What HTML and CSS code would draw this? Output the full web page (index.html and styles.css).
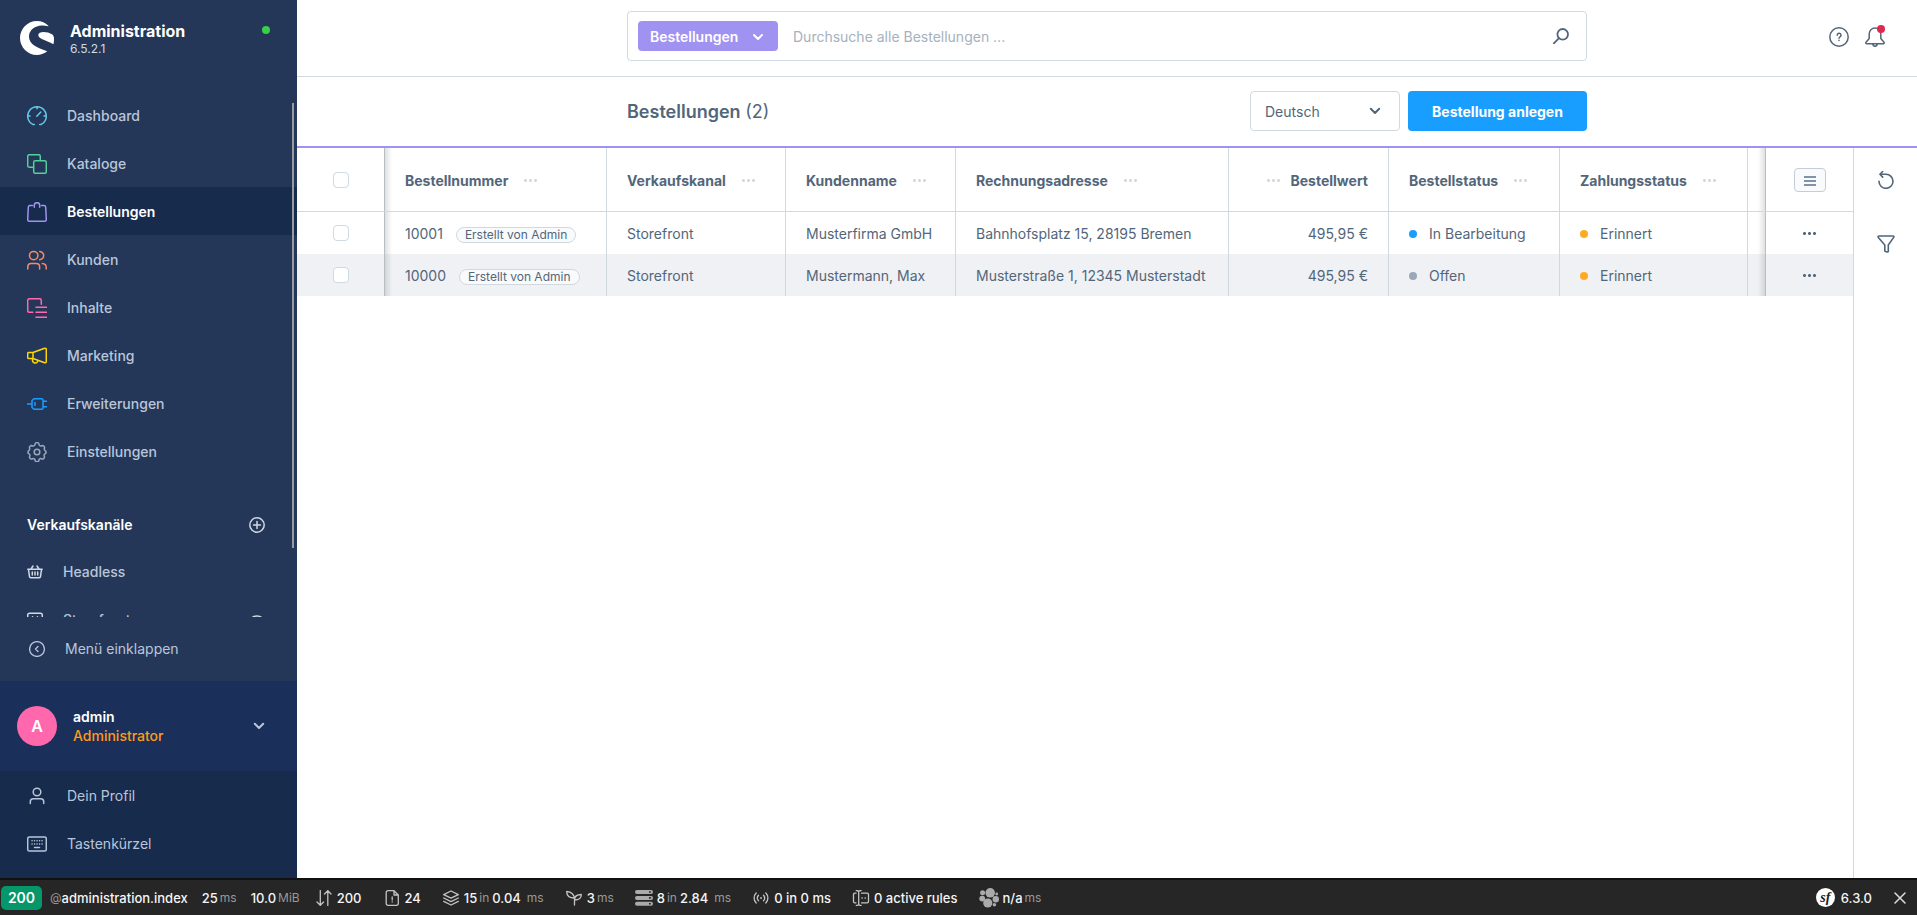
FILE: index.html
```html
<!DOCTYPE html>
<html lang="de">
<head>
<meta charset="utf-8">
<title>Bestellungen | Administration</title>
<link rel="stylesheet" href="styles.css">
</head>
<body>
<div class="app">
  <aside class="menu">
    <header class="menu-head">
      <svg class="logo" viewBox="0 0 34 34" width="34" height="34"><path d="M28.300 4.700C25.500 1.800 21.500 0 17 0 7.600 0 0 7.600 0 17s7.600 17 17 17c3.600 0 7-1.200 9.700-3.200.4-.3.300-.7-.1-.9C22 28.300 17.500 27 14.200 24.600 11.200 22.400 9 19.200 9 15.400 9 8.600 15.500 4.900 21.500 4.500c2.400-.1 4.700.1 6.500.7.500.1.700-.2.300-.5z"/><path d="M33.900 16.500c-.2-1.300-.7-2.300-1.500-2.900C29.800 11.800 26.500 11 23.500 11c-2.900 0-5.200 1-5.200 3.100 0 2.900 4.200 4.300 8.700 6.100 2.100.8 4.100 1.700 6 2.800.3.200.5 0 .6-.3.400-1.900.5-4.200.3-6.200z"/></svg>
      <div class="brand"><strong class="brand-name">Administration</strong><span class="brand-version">6.5.2.1</span></div>
      <span class="online"></span>
    </header>

    <div class="menu-scroll">
      <nav class="nav">
        <a class="nav-item" href="#"><svg class="ico c-cyan" viewBox="0 0 20 20"><path d="M7.300 18.400H5.800A9.300 9.300 0 1 1 14.200 18.400H12.700M10 .8v2M.8 10h2.200M17 10h2.200M9.800 10.300 13.800 6"/></svg>Dashboard</a>
        <a class="nav-item" href="#"><svg class="ico c-green" viewBox="0 0 20 20"><rect x="6.700" y="6.700" width="12.600" height="12.600" rx="1.600"/><path d="M6.500 13.300H2.300A1.600 1.600 0 0 1 .7 11.700V2.300A1.600 1.600 0 0 1 2.300.7h9.400a1.600 1.600 0 0 1 1.600 1.600v4.200"/></svg>Kataloge</a>
        <a class="nav-item nav-active" href="#"><svg class="ico c-violet" viewBox="0 0 20 20"><path d="M5.500 3.600H3a1.700 1.700 0 0 0-1.700 1.600L.7 17.500a1.700 1.700 0 0 0 1.700 1.800h15.200a1.700 1.700 0 0 0 1.700-1.800L18.700 5.200A1.700 1.700 0 0 0 17 3.600h-2.500M7.300 5.200V3.400a2.700 2.700 0 0 1 5.400 0v1.800"/></svg>Bestellungen</a>
        <a class="nav-item" href="#"><svg class="ico c-coral" viewBox="0 0 20 20"><circle cx="6.700" cy="5.600" r="4.200"/><path d="M.8 19v-2.300a3.300 3.300 0 0 1 3.300-3.300h5.200a3.300 3.300 0 0 1 3.300 3.300V19M12.700 1.400c2.300.4 4 2.200 4 4.200s-1.700 3.800-4 4.200M15.300 13.600c2.400.3 3.900 1.600 3.900 3.600V19"/></svg>Kunden</a>
        <a class="nav-item" href="#"><svg class="ico c-pink" viewBox="0 0 20 20"><path d="M5.800 14.300H2.500A1.800 1.800 0 0 1 .7 12.500v-10A1.800 1.800 0 0 1 2.500.7h10a1.800 1.800 0 0 1 1.800 1.800v3.800M9 9.300h11M9 14.300h11M9 19.300h11"/></svg>Inhalte</a>
        <a class="nav-item" href="#"><svg class="ico c-yellow" viewBox="0 0 20 20"><path d="M6 6.500 17.600 2.300a1.200 1.200 0 0 1 1.700 1.100v12.200a1.200 1.200 0 0 1-1.700 1.100L6 12.500zM6 6.500H1.700a1 1 0 0 0-1 1v4a1 1 0 0 0 1 1H6M5.500 12.700v1.600a2.700 2.700 0 0 0 5.200 1v-1"/></svg>Marketing</a>
        <a class="nav-item" href="#"><svg class="ico c-blue" viewBox="0 0 20 20"><path d="M.2 10h4.500M7.300 4.700h7.400a1.300 1.300 0 0 1 1.300 1.300v8a1.300 1.300 0 0 1-1.300 1.300H7.300L5 13.500v-7zM16 7.300h4M16 12.700h4M8 8.500v3"/></svg>Erweiterungen</a>
        <a class="nav-item" href="#"><svg class="ico c-gray" viewBox="0 0 20 20"><circle cx="10" cy="10" r="2.800"/><path d="M8 2.600a2 2 0 0 1 4 0 2 2 0 0 0 2.800 1.200 2 2 0 0 1 2.600 2.600A2 2 0 0 0 18 8.500a1.800 1.800 0 0 1 0 3.300 2 2 0 0 0-.8 2.300 2 2 0 0 1-2.700 2.700 2 2 0 0 0-2.500.9 2 2 0 0 1-4 0 2 2 0 0 0-2.500-.9 2 2 0 0 1-2.700-2.700A2 2 0 0 0 2 11.800a1.800 1.800 0 0 1 0-3.300 2 2 0 0 0 .6-2.100 2 2 0 0 1 2.600-2.600A2 2 0 0 0 8 2.600z"/></svg>Einstellungen</a>
      </nav>
      <section class="channels">
        <div class="channels-head"><h2 class="channels-title">Verkaufskanäle</h2>
          <button class="bare" type="button" aria-label="Kanal hinzufügen"><svg class="ico-16" viewBox="0 0 16 16"><circle cx="8" cy="8" r="7.200"/><path d="M8 4.500v7M4.500 8h7"/></svg></button></div>
        <a class="nav-item channel" href="#"><svg class="ico-16" viewBox="0 0 16 16"><path d="M.8 5.300h14.400M1.500 5.500l1 7.200a1.300 1.300 0 0 0 1.300 1.100h8.400a1.300 1.300 0 0 0 1.300-1.100l1-7.200M4 5l2-3M12 5l-2-3M5.300 8v3M8 8v3M10.700 8v3"/></svg>Headless</a>
        <a class="nav-item channel" href="#"><svg class="ico-16" viewBox="0 0 16 16"><path d="M.7 6V3A1.800 1.800 0 0 1 2.500 1.200h11A1.800 1.800 0 0 1 15.300 3v3a2.400 2.400 0 0 1-4.800 0 2.500 2.500 0 0 1-5 0 2.400 2.400 0 0 1-4.800 0zM5.500 6V4.800M10.500 6V4.800M2 9v5.500h12V9"/></svg>Storefront<svg class="ico-16 eye" viewBox="0 0 16 16"><path d="M.7 8.500S3.200 4 8 4s7.300 4.500 7.300 4.500S12.800 13 8 13 .7 8.500.7 8.500z"/><circle cx="8" cy="8.500" r="2"/></svg></a>
      </section>
    </div>

    <button class="collapse" type="button"><svg class="ico-16" viewBox="0 0 16 16"><circle cx="8" cy="8" r="7.400"/><path d="M9 5.500 6.500 8 9 10.500"/></svg>Menü einklappen</button>

    <div class="user">
      <span class="avatar">A</span>
      <div class="user-info"><strong class="user-name">admin</strong><span class="user-role">Administrator</span></div>
      <button class="bare" type="button" aria-label="Benutzermenü"><svg class="chev" viewBox="0 0 12 12"><path d="m1.800 3.800 4.200 4.200 4.200-4.200"/></svg></button>
    </div>
    <nav class="user-nav">
      <a class="nav-item" href="#"><svg class="ico" viewBox="0 0 20 20"><circle cx="10" cy="6" r="3.800"/><path d="M3.300 17.500v-1.800a3 3 0 0 1 3-3h7.400a3 3 0 0 1 3 3v1.800"/></svg>Dein Profil</a>
      <a class="nav-item" href="#"><svg class="ico" viewBox="0 0 20 20"><rect x=".7" y="3" width="18.600" height="14" rx="1.600"/><path d="M5 6.700h.1M7.500 6.700h.1M10 6.700h.1M12.500 6.700h.1M15 6.700h.1M5 10h.1M7.500 10h.1M10 10h.1M12.500 10h.1M15 10h.1M7.500 13.400h5"/></svg>Tastenkürzel</a>
    </nav>
    <span class="scrollbar"></span>
  </aside>

  <main class="page">
    <header class="topbar">
      <form class="search">
        <button class="chip" type="button">Bestellungen<svg class="chev" viewBox="0 0 12 12"><path d="m2 4 4 4 4-4"/></svg></button>
        <input class="search-input" type="search" aria-label="Suche" placeholder="Durchsuche alle Bestellungen ...">
        <button class="bare" type="button" aria-label="Suchen"><svg class="ico-16" viewBox="0 0 16 16"><circle cx="9.700" cy="6.300" r="5.300"/><path d="M6 10.200.9 15.300"/></svg></button>
      </form>
      <div class="top-actions">
        <button class="bare" type="button" aria-label="Hilfe"><svg class="ico" viewBox="0 0 20 20"><circle cx="10" cy="10" r="9.200"/><path d="M8.200 8.200a1.900 1.900 0 1 1 2.800 1.600c-.7.400-1 .7-1 1.400M10 13.300v.2"/></svg></button>
        <button class="bare bell" type="button" aria-label="Benachrichtigungen"><svg class="ico" viewBox="0 0 20 20"><path d="M10 1a5.800 5.800 0 0 0-5.800 5.800v4.700L1 15.300c-.5.700-.1 1.400.7 1.400h16.600c.8 0 1.200-.7.700-1.400l-3.200-3.800V6.800A5.800 5.800 0 0 0 10 1zM7.700 17c.3 1.600 1.200 2.300 2.300 2.300s2-.7 2.300-2.300"/></svg><span class="bell-dot"></span></button>
      </div>
    </header>

    <div class="smartbar">
      <div class="smartbar-inner">
        <h1 class="title">Bestellungen <span class="count">(2)</span></h1>
        <div class="lang-wrap"><select class="lang" aria-label="Sprache"><option>Deutsch</option></select><svg class="chev lang-chev" viewBox="0 0 12 12"><path d="m1.800 3.800 4.200 4.200 4.200-4.200"/></svg></div>
        <button class="primary" type="button">Bestellung anlegen</button>
      </div>
    </div>

    <div class="content">
      <div class="grid-wrap">
        <table class="grid">
          <colgroup><col class="w-check"><col class="w-number"><col class="w-channel"><col class="w-customer"><col class="w-address"><col class="w-value"><col class="w-status"><col class="w-payment"><col><col class="w-actions"></colgroup>
          <thead>
            <tr>
              <th class="check shade-right"><input class="box" type="checkbox" aria-label="Alle auswählen"></th>
              <th><span class="th">Bestellnummer<i class="dots"></i></span></th>
              <th><span class="th">Verkaufskanal<i class="dots"></i></span></th>
              <th><span class="th">Kundenname<i class="dots"></i></span></th>
              <th><span class="th">Rechnungsadresse<i class="dots"></i></span></th>
              <th><span class="th th-right"><i class="dots"></i>Bestellwert</span></th>
              <th><span class="th">Bestellstatus<i class="dots"></i></span></th>
              <th><span class="th">Zahlungsstatus<i class="dots"></i></span></th>
              <th></th>
              <th class="actions shade-left"><button class="columns" type="button" aria-label="Spalten"><svg viewBox="0 0 12 12" width="12" height="12"><path d="M0 2h12M0 6h12M0 10h12"/></svg></button></th>
            </tr>
          </thead>
          <tbody>
            <tr>
              <td class="check shade-right"><input class="box" type="checkbox" aria-label="10001 auswählen"></td>
              <td><a class="order" href="#">10001</a><span class="badge">Erstellt von Admin</span></td>
              <td>Storefront</td><td>Musterfirma GmbH</td><td>Bahnhofsplatz 15, 28195 Bremen</td><td class="num">495,95 €</td>
              <td><span class="state s-blue">In Bearbeitung</span></td><td><span class="state s-orange">Erinnert</span></td><td></td>
              <td class="actions shade-left"><button class="bare more" type="button" aria-label="Aktionen"><i class="dots dots-dark"></i></button></td>
            </tr>
            <tr>
              <td class="check shade-right"><input class="box" type="checkbox" aria-label="10000 auswählen"></td>
              <td><a class="order" href="#">10000</a><span class="badge">Erstellt von Admin</span></td>
              <td>Storefront</td><td>Mustermann, Max</td><td>Musterstraße 1, 12345 Musterstadt</td><td class="num">495,95 €</td>
              <td><span class="state s-gray">Offen</span></td><td><span class="state s-orange">Erinnert</span></td><td></td>
              <td class="actions shade-left"><button class="bare more" type="button" aria-label="Aktionen"><i class="dots dots-dark"></i></button></td>
            </tr>
          </tbody>
        </table>
      </div>
      <aside class="tools">
        <button class="bare tool" type="button" aria-label="Aktualisieren"><svg class="ico-18" viewBox="0 0 18 18"><path d="M2 10.200A7 7 0 1 0 9 3.300H3M5.700.5 2.900 3.300l2.800 2.800"/></svg></button>
        <button class="bare tool" type="button" aria-label="Filter"><svg class="ico-18" viewBox="0 0 18 18"><path d="M2 1h14c.8 0 1.200.8.700 1.400L11.300 10v6.300c0 .6-.5.900-1 .7l-1.900-.6a.8.800 0 0 1-.6-.8V10L1.300 2.400C.8 1.800 1.200 1 2 1z"/></svg></button>
      </aside>
    </div>
  </main>
</div>

<footer class="debug">
  <a class="code" href="#">200</a>
  <span class="dbg dbg-text"><small>@</small>administration.index</span>
  <span class="dbg dbg-text">25<small class="unit">ms</small></span>
  <span class="dbg dbg-text">10.0<small class="unit">MiB</small></span>
  <span class="dbg"><svg class="dico" viewBox="0 0 16 16"><path d="M4.300.5v15M1 12l3.300 3.300L7.500 12M11.800 15.500V.5M8.500 4l3.300-3.300L15 4"/></svg>200</span>
  <span class="dbg"><svg class="dico" viewBox="0 0 16 16"><path d="M10 .7H4A1.800 1.800 0 0 0 2.200 2.500v11A1.800 1.800 0 0 0 4 15.300h8.500a1.800 1.800 0 0 0 1.800-1.800V5zM10 .7V5h4.300M8.200 7v3M8.200 11.800v.2"/></svg>24</span>
  <span class="dbg"><svg class="dico" viewBox="0 0 16 16"><path d="m8 1 7.300 3.600L8 8.200.7 4.600zM.7 8 8 11.600 15.300 8M.7 11.400 8 15l7.300-3.600"/></svg>15<small class="unit">in</small><b class="val">0.04</b><small class="unit-wide">ms</small></span>
  <span class="dbg"><svg class="dico" viewBox="0 0 16 16"><path d="M8.500 15V9.500C8.500 5 5.500 1.500.7 1.500c0 4 2.800 6.500 7.800 6.500M8.500 10c0-3.500 2.500-5.500 6.800-5.500 0 3.500-2.500 5.500-6.800 5.500"/></svg>3<small class="unit">ms</small></span>
  <span class="dbg"><svg class="dico solid" viewBox="0 0 18 16"><path fill-rule="evenodd" d="M2 0h14q2 0 2 2t-2 2H2Q0 4 0 2t2-2zm12 1.200v1.600h1.800V1.200zM2 5.900h14q2 0 2 2t-2 2H2q-2 0-2-2t2-2zm12 1.200v1.600h1.800V7.100zM2 11.800h14q2 0 2 2t-2 2H2q-2 0-2-2t2-2zm12 1.200v1.600h1.800V13z"/></svg>8<small class="unit">in</small><b class="val">2.84</b><small class="unit-wide">ms</small></span>
  <span class="dbg"><svg class="dico" viewBox="0 0 16 16"><path d="M3.200 3a7 7 0 0 0 0 10M12.800 3a7 7 0 0 1 0 10M5.500 5.300a4 4 0 0 0 0 5.400M10.500 5.300a4 4 0 0 1 0 5.400M7.500 8h1"/></svg>0 in 0 ms</span>
  <span class="dbg"><svg class="dico" viewBox="0 0 16 16"><path d="M3 3.200H1.800A1.300 1.300 0 0 0 .5 4.500v7a1.300 1.300 0 0 0 1.300 1.300H3M8.500 3.200h5.700a1.300 1.300 0 0 1 1.300 1.300v7a1.300 1.300 0 0 1-1.300 1.300H8.500M5.700 1.500v13M3.300.5q2.400 0 2.400 1.500 0-1.500 2.400-1.500M3.300 15.500q2.400 0 2.400-1.500 0 1.500 2.400 1.500M9 8h.3M12 8h.3"/></svg>0 active rules</span>
  <span class="dbg"><svg class="dico-lg solid" viewBox="0 0 20 20"><circle cx="11.200" cy="4.800" r="4.800"/><circle cx="3.600" cy="4.800" r="2.500"/><circle cx="3.200" cy="10.600" r="2.900"/><circle cx="16.800" cy="11.300" r="3.200"/><circle cx="8.800" cy="15" r="4.600"/><circle cx="15.400" cy="16.700" r="1.800"/><circle cx="17.700" cy="6" r="1.400"/></svg>n/a<small class="unit">ms</small></span>
  <span class="dbg-right"><span class="sf">sf</span>6.3.0<button class="bare close" type="button" aria-label="Schließen"><svg viewBox="0 0 12 12" width="12" height="12"><path d="m1 1 10 10M11 1 1 11"/></svg></button></span>
</footer>
</body>
</html>
```
FILE: styles.css
```css
* { box-sizing: border-box; }
body {
  margin: 0;
  height: 100vh;
  display: flex;
  flex-direction: column;
  font: 14px/20px Inter, "Liberation Sans", sans-serif;
  color: #52667a;
  background: #fff;
}
a { color: inherit; text-decoration: none; }
svg { fill: none; stroke: currentColor; stroke-width: 1.5; stroke-linecap: round; stroke-linejoin: round; flex: none; display: block; }
button { font: inherit; cursor: pointer; }
.bare { border: 0; padding: 0; background: none; color: inherit; display: inline-flex; }
.ico { width: 20px; height: 20px; }
.ico-16 { width: 16px; height: 16px; }
.ico-18 { width: 18px; height: 18px; stroke-width: 1.6; }
.chev { width: 12px; height: 12px; stroke-width: 2; }

.app { flex: 1; display: flex; min-height: 0; }

/* Main menu */
.menu {
  position: relative;
  width: 297px;
  flex: none;
  display: flex;
  flex-direction: column;
  background: #243758;
  color: #b9c6da;
}
.menu-head { height: 91px; flex: none; display: flex; align-items: flex-start; padding: 21px 27px 0 20px; }
.logo { fill: #fff; stroke: none; }
.brand { margin-left: 16px; flex: 1; }
.brand-name { display: block; font-size: 16px; font-weight: 700; color: #fff; }
.brand-version { display: block; font-size: 12px; line-height: 16px; color: #d1d9e0; }
.online { width: 8px; height: 8px; border-radius: 50%; background: #37d046; margin-top: 5px; }
.menu-scroll { flex: 1; min-height: 0; overflow: hidden; }
.nav-item { display: flex; align-items: center; gap: 20px; height: 48px; padding: 1px 32px 0 27px; font-weight: 500; }
.nav-active { background: #172b4d; color: #fff; font-weight: 600; }
.c-cyan { color: #65c7e8; }
.c-green { color: #54d09a; }
.c-violet { color: #a092f0; }
.c-coral { color: #f88962; }
.c-pink { color: #ff68ac; }
.c-yellow { color: #ffd700; }
.c-blue { color: #189eff; }
.c-gray { color: #98a9bc; }
.channels { padding-top: 28px; }
.channels-head { display: flex; align-items: center; justify-content: space-between; height: 44px; padding: 0 32px 0 27px; }
.channels-title { margin: 0; font-size: 14px; font-weight: 600; color: #fff; }
.channels .ico-16 { color: #d1d9e0; }
.eye { margin-left: auto; }
.collapse { display: flex; align-items: center; gap: 20px; height: 64px; flex: none; border: 0; padding: 0 29px; background: none; color: inherit; }
.collapse .ico-16 { stroke-width: 1.3; }
.user { display: flex; align-items: center; height: 90px; flex: none; padding: 0 32px 0 17px; background: #1a305a; }
.avatar { width: 40px; height: 40px; border-radius: 50%; display: grid; place-items: center; background: #ff68ac; color: #fff; font-size: 16px; font-weight: 600; }
.user-info { flex: 1; margin-left: 16px; line-height: 19px; }
.user-name { display: block; font-weight: 600; color: #fff; }
.user-role { display: block; font-weight: 500; color: #ff9a1a; }
.user-nav { height: 107px; flex: none; background: #172b4d; }
.user-nav .nav-item { font-weight: 400; }
.scrollbar { position: absolute; top: 103px; right: 3px; width: 2px; height: 445px; background: #989aa4; }

/* Header */
.page { flex: 1; min-width: 0; display: flex; flex-direction: column; }
.topbar { height: 77px; flex: none; display: grid; grid-template-columns: 1fr minmax(0, 960px) 1fr; align-items: start; padding-top: 11px; border-bottom: 1px solid #d1d9e0; }
.search { grid-column: 2; display: flex; align-items: center; height: 50px; padding: 0 17px 0 10px; border: 1px solid #d1d9e0; border-radius: 4px; }
.chip { display: flex; align-items: center; justify-content: space-between; width: 140px; height: 30px; border: 0; border-radius: 4px; padding: 2px 14px 0 12px; background: #a092f0; color: #fff; font-weight: 600; }
.search-input { flex: 1; min-width: 0; height: 40px; border: 0; padding: 0 15px; outline: 0; background: none; font: inherit; color: inherit; }
.search-input::placeholder { color: #a5b1bd; opacity: 1; }
.search .ico-16 { stroke-width: 1.8; }
.top-actions { grid-column: 3; justify-self: end; display: flex; gap: 16px; padding: 16px 32px 0 0; }
.bell { position: relative; }
.bell-dot { position: absolute; top: -2px; right: 0; width: 8px; height: 8px; border-radius: 50%; background: #de294c; }

.smartbar { height: 71px; flex: none; display: flex; justify-content: center; align-items: flex-start; padding-top: 14px; border-bottom: 2px solid #a092f0; }
.smartbar-inner { width: 960px; display: flex; align-items: center; gap: 8px; }
.title { flex: 1; margin: 0; padding-top: 2px; font-size: 18px; line-height: 24px; font-weight: 600; }
.count { font-weight: 400; }
.lang-wrap { position: relative; }
.lang { appearance: none; display: block; width: 150px; height: 40px; border: 1px solid #d1d9e0; border-radius: 4px; padding: 2px 14px 0; background: #fff; font: inherit; color: inherit; }
.lang-chev { position: absolute; right: 19px; top: 14px; pointer-events: none; }
.primary { min-width: 179px; height: 40px; border: 0; border-radius: 4px; padding: 2px 16px 0; background: #189eff; color: #fff; font-weight: 700; }

/* Order list */
.content { flex: 1; min-height: 0; display: flex; }
.grid-wrap { flex: 1; min-width: 0; overflow: hidden; }
.grid { width: 100%; table-layout: fixed; border-collapse: separate; border-spacing: 0; }
.w-check { width: 88px; }
.w-number { width: 222px; }
.w-channel { width: 179px; }
.w-customer { width: 170px; }
.w-address { width: 273px; }
.w-value { width: 160px; }
.w-status { width: 171px; }
.w-payment { width: 188px; }
.w-actions { width: 87px; }
.grid th, .grid td { padding: 0; border-right: 1px solid #d1d9e0; text-align: left; white-space: nowrap; }
.grid th:not(:empty), .grid td:not(:empty) { padding: 2px 20px 0; }
.grid th { height: 64px; border-bottom: 1px solid #d1d9e0; font-weight: 700; }
.grid td { height: 42px; }
.grid tbody tr:nth-child(even) { background: #f0f1f5; }
.grid .actions { border-right: 0; }
.grid .check:not(:empty), .grid .actions:not(:empty) { padding: 0 20px; }
.grid .num { text-align: right; }
.shade-right, .shade-left { position: relative; }
.shade-right::after, .shade-left::after { content: ""; position: absolute; top: 0; bottom: 0; width: 8px; }
.shade-right::after { left: 100%; background: linear-gradient(90deg, rgba(60, 60, 60, .18), transparent); }
.shade-left::after { right: 100%; background: linear-gradient(270deg, rgba(60, 60, 60, .18), transparent); }
.th { display: flex; align-items: center; gap: 16px; }
.th-right { justify-content: flex-end; gap: 10px; }
.dots { width: 13px; height: 3px; background: radial-gradient(circle at 1.5px 1.5px, #d1d9e0 1px, transparent 2px) 0 0 / 5px 3px; }
.dots-dark { background-image: radial-gradient(circle at 1.5px 1.5px, #52667a 1px, transparent 2px); }
.more { display: flex; align-items: center; justify-content: center; height: 20px; margin: 0 auto; }
.box { appearance: none; display: block; width: 16px; height: 16px; margin: 0 auto; border: 1px solid #d1d9e0; border-radius: 4px; background: #fff; }
.badge { display: inline-block; margin-left: 13px; border: 1px solid #d1d9e0; border-radius: 8px; padding: 0 8px; background: #f9fafb; font-size: 12px; line-height: 14px; }
.state { display: flex; align-items: center; gap: 12px; }
.state::before { content: ""; width: 8px; height: 8px; border-radius: 50%; background: #9aa8b9; }
.s-blue::before { background: #189eff; }
.s-orange::before { background: #ffab22; }
.columns { display: grid; place-items: center; width: 32px; height: 24px; margin: 0 auto; padding: 2px 0 0; border: 1px solid #c2cdd8; border-radius: 4px; background: #f9fafb; color: #8093a8; }
.columns svg { stroke-width: 2; stroke-linecap: butt; }
.tools { width: 64px; flex: none; border-left: 1px solid #d1d9e0; }
.tool { display: flex; justify-content: center; align-items: center; width: 100%; height: 64px; }

/* Debug toolbar */
.debug { height: 37px; flex: none; display: flex; align-items: center; gap: 21px; padding: 0 11px 0 1px; border-top: 2px solid #111; background: #262626; color: #f5f5f5; font-size: 13px; font-weight: 500; white-space: nowrap; }
.code { width: 41px; height: 24px; border-radius: 5px; background: #059669; color: #fff; font-size: 14px; font-weight: 600; line-height: 24px; text-align: center; }
.dbg { display: flex; align-items: center; }
.dbg-text { margin-left: -7px; }
.code + .dbg-text { margin-left: -13px; }
.dbg-text + .dbg:not(.dbg-text) { margin-left: -6px; }
.debug small { font-size: 12px; font-weight: 400; color: #999; }
.unit { margin-left: 2px; }
.val { margin-left: 3px; font-weight: 500; }
.unit-wide { margin-left: 6px; }
.dico { width: 18px; height: 16px; margin-right: 4px; color: #c4c4c4; stroke-width: 1.3; }
.dico-lg { width: 20px; height: 20px; margin-right: 4px; }
.solid { fill: #aaa; stroke: none; }
.dbg-right { margin-left: auto; display: flex; align-items: center; }
.sf { display: grid; place-items: center; width: 19px; height: 19px; margin-right: 6px; border-radius: 50%; background: #fff; color: #222; font: italic bold 14px/18px "Liberation Serif", serif; }
.close { margin-left: 22px; color: #ddd; }
```
